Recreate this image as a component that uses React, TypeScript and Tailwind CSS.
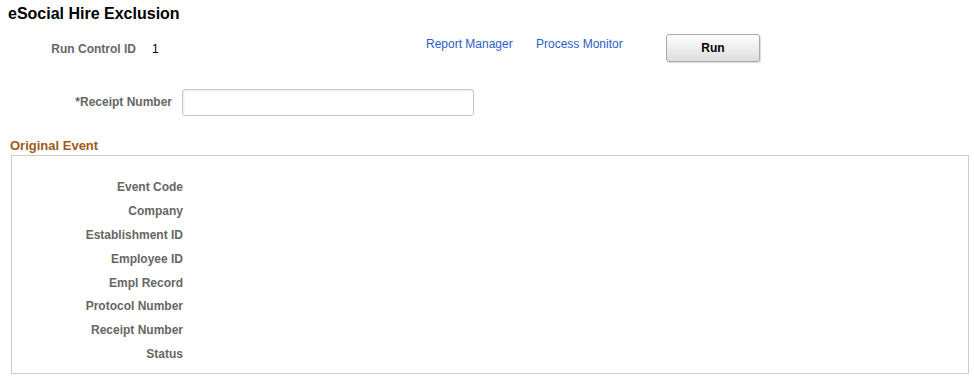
import React from "react";

const labels = [
  "Event Code",
  "Company",
  "Establishment ID",
  "Employee ID",
  "Empl Record",
  "Protocol Number",
  "Receipt Number",
  "Status",
];

export default function App() {
  return (
    <div
      className="w-[974px] h-[383px] bg-white text-black"
      style={{ fontFamily: '"Liberation Sans", Arial, sans-serif' }}
    >
      <div className="pl-[8px] pt-[4px] h-[34px] text-[16px] font-bold leading-[19px] text-black">
        eSocial Hire Exclusion
      </div>

      <div className="flex items-center h-[28px]">
        <div className="w-[136px] text-right text-[12px] font-bold text-[#666666] pt-[1px]">
          Run Control ID
        </div>
        <div className="ml-[16px] w-[274px] text-[12px] text-black pt-[1px]">1</div>
        <a className="w-[110px] text-[12px] text-[#2b5ec8] mb-[8px]">Report Manager</a>
        <a className="w-[130px] text-[12px] text-[#2b5ec8] mb-[8px]">Process Monitor</a>
        <button className="w-[94px] h-[28px] rounded-[3px] border border-[#a9a9a9] bg-gradient-to-b from-[#ffffff] to-[#dddddd] text-[12px] font-bold text-black shadow-[1px_1px_1px_rgba(0,0,0,0.15)]">
          Run
        </button>
      </div>

      <div className="flex items-center mt-[27px] h-[27px]">
        <div className="w-[172px] text-right text-[12px] font-bold text-[#666666] mb-[2px]">
          *Receipt Number
        </div>
        <div className="ml-[10px] w-[292px] h-[27px] rounded-[3px] border border-[#c6c6c6] bg-white shadow-[inset_1px_1px_2px_rgba(0,0,0,0.08)]"></div>
      </div>

      <div className="mt-[22px] pl-[10px] h-[13px] text-[13px] font-bold leading-[15px] text-[#a4581c]">
        Original Event
      </div>

      <div className="ml-[11px] mt-[4px] w-[958px] h-[219px] border border-[#cccccc] pt-[19px]">
        {labels.map((l) => (
          <div key={l} className="h-[23.9px] flex items-center">
            <div className="w-[171px] text-right text-[12px] font-bold text-[#666666]">{l}</div>
          </div>
        ))}
      </div>
    </div>
  );
}
